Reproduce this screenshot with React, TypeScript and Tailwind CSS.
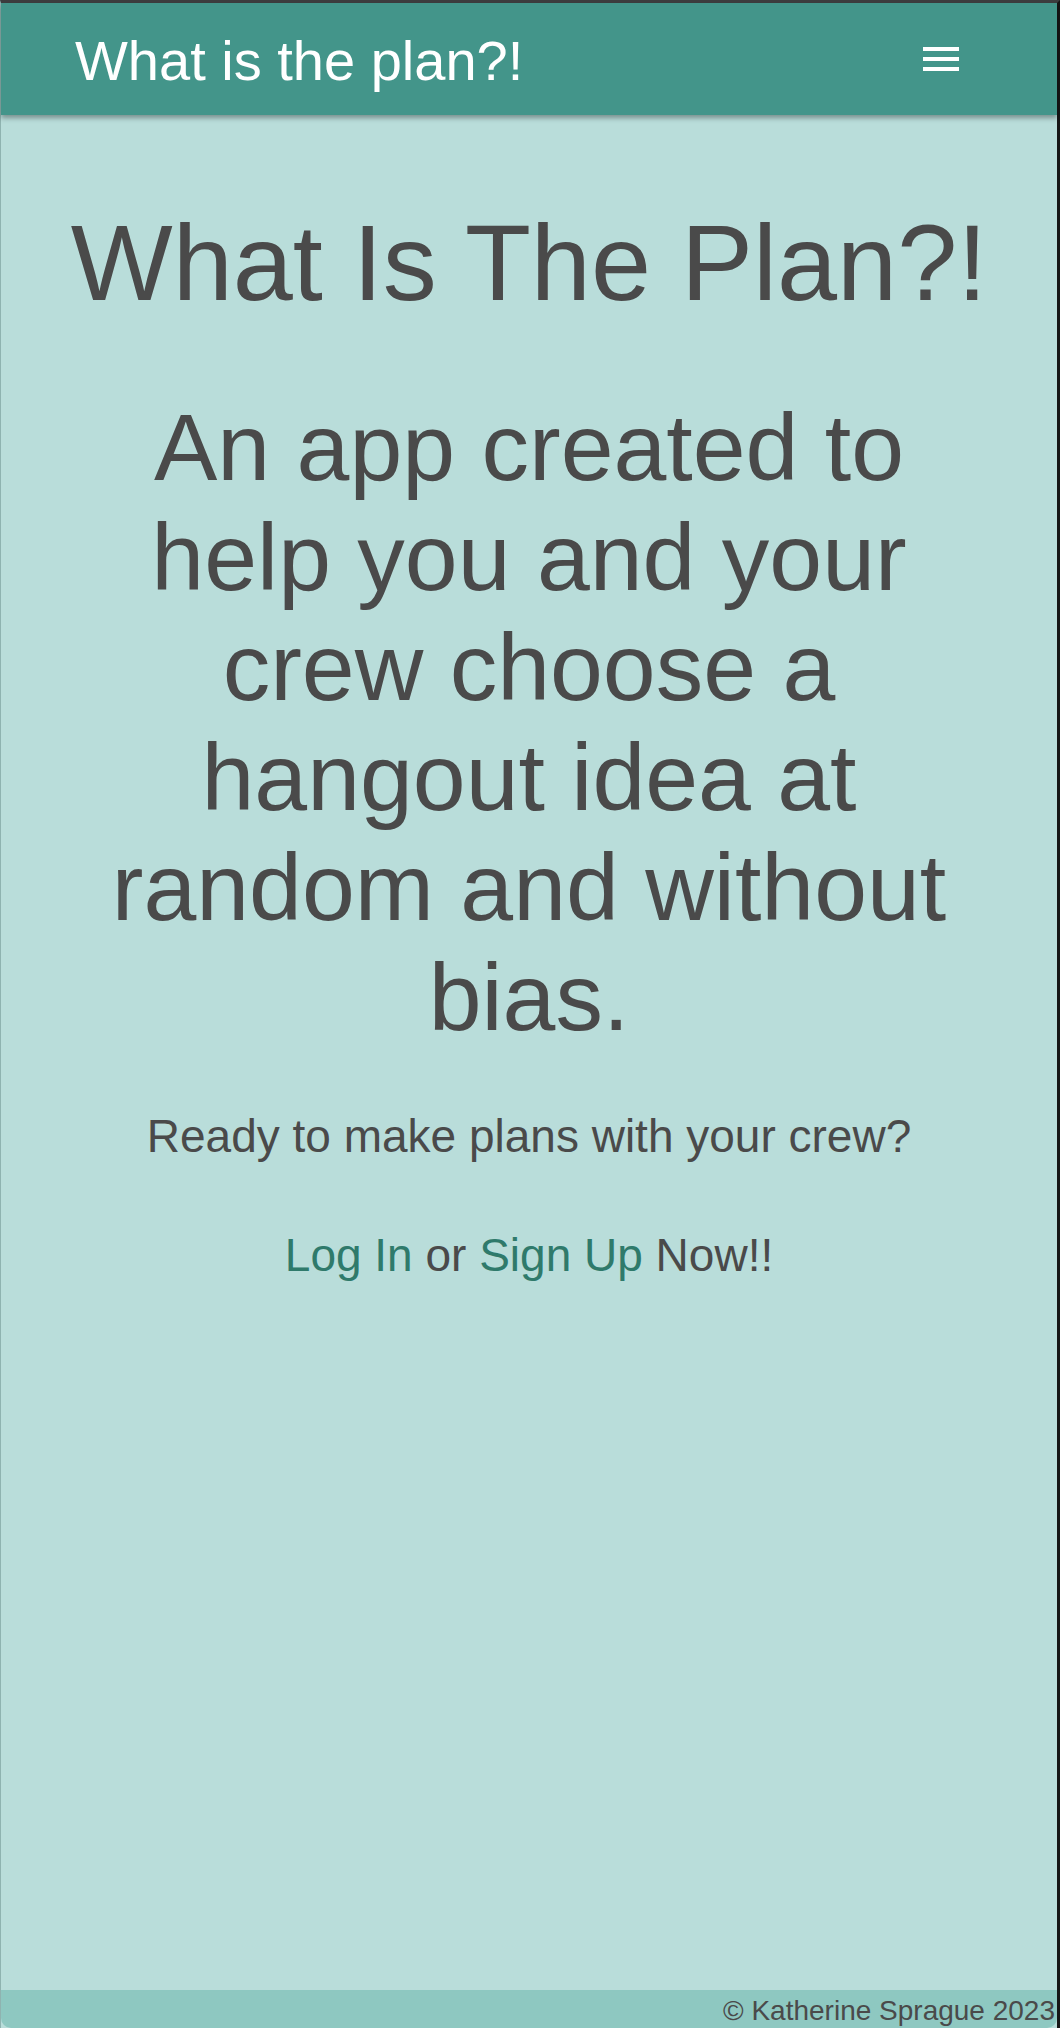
export default function App() {
  return (
    <div className="min-h-screen flex flex-col bg-[#b9ddda] border-t-[3px] border-t-[#3d3d3f] border-r-[3px] border-r-[#161616] border-l border-l-[#8fb3b0] font-['Liberation_Sans',Arial,sans-serif] text-[#4a4a4a]">
      <header className="h-[112px] flex items-center justify-between pl-[74px] pr-[98px] bg-[#43958a] shadow-[0_3px_5px_rgba(0,0,0,0.35)] relative z-10">
        <a href="#" className="text-white text-[56px] leading-none mt-1">
          What is the plan?!
        </a>
        <button className="flex flex-col gap-[6px] w-[36px]" aria-label="menu">
          <span className="h-1 w-full bg-white" />
          <span className="h-1 w-full bg-white" />
          <span className="h-1 w-full bg-white" />
        </button>
      </header>

      <main className="flex-1 flex flex-col items-center text-center pt-[83px]">
        <h1 className="text-[108px] leading-[1.2]">What Is The Plan?!</h1>
        <h2 className="mt-[64px] max-w-[880px] text-[95px] leading-[110px]">
          An app created to help you and your crew choose a hangout idea at random and without bias.
        </h2>
        <p className="mt-[50px] text-[46px] leading-[1.5]">Ready to make plans with your crew?</p>
        <p className="mt-[50px] text-[46px] leading-[1.5]">
          <a href="#" className="text-[#2f7a6b]">Log In</a> or{" "}
          <a href="#" className="text-[#2f7a6b]">Sign Up</a> Now!!
        </p>
      </main>

      <footer className="h-[38px] bg-[#8ec8c1] flex items-center justify-end pt-1 pr-[2px] rounded-b-[10px]">
        <span className="text-[28px] leading-none">© Katherine Sprague 2023</span>
      </footer>
    </div>
  );
}
